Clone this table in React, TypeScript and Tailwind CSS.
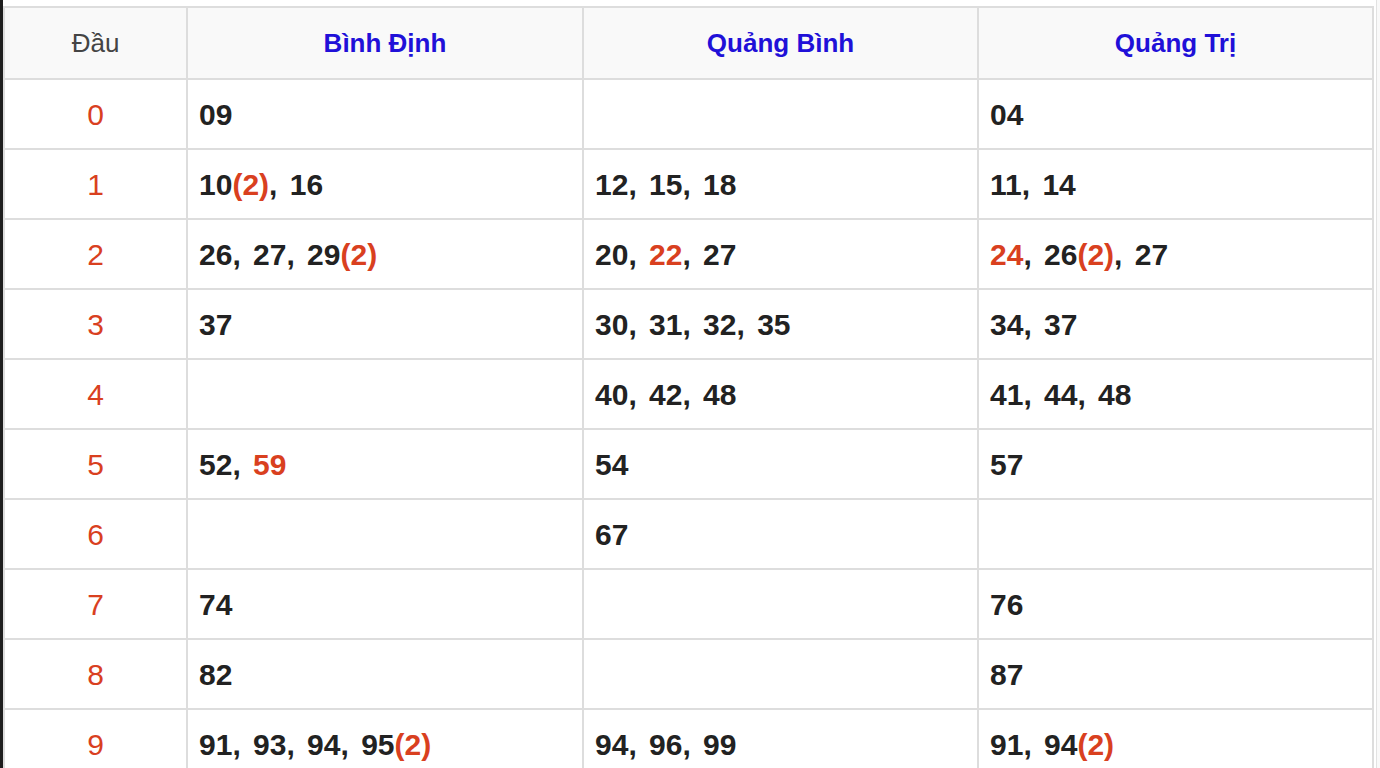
type Item = { n: string; c?: number; hot?: boolean };

const provinces = ['Bình Định', 'Quảng Bình', 'Quảng Trị'];

// số đầu 0-9, mỗi tỉnh một cột
const rows: Item[][][] = [
  [[{ n: '09' }], [], [{ n: '04' }]],
  [[{ n: '10', c: 2 }, { n: '16' }], [{ n: '12' }, { n: '15' }, { n: '18' }], [{ n: '11' }, { n: '14' }]],
  [
    [{ n: '26' }, { n: '27' }, { n: '29', c: 2 }],
    [{ n: '20' }, { n: '22', hot: true }, { n: '27' }],
    [{ n: '24', hot: true }, { n: '26', c: 2 }, { n: '27' }],
  ],
  [[{ n: '37' }], [{ n: '30' }, { n: '31' }, { n: '32' }, { n: '35' }], [{ n: '34' }, { n: '37' }]],
  [[], [{ n: '40' }, { n: '42' }, { n: '48' }], [{ n: '41' }, { n: '44' }, { n: '48' }]],
  [[{ n: '52' }, { n: '59', hot: true }], [{ n: '54' }], [{ n: '57' }]],
  [[], [{ n: '67' }], []],
  [[{ n: '74' }], [], [{ n: '76' }]],
  [[{ n: '82' }], [], [{ n: '87' }]],
  [
    [{ n: '91' }, { n: '93' }, { n: '94' }, { n: '95', c: 2 }],
    [{ n: '94' }, { n: '96' }, { n: '99' }],
    [{ n: '91' }, { n: '94', c: 2 }],
  ],
];

function Cell({ items }: { items: Item[] }) {
  return (
    <div className="bg-white h-[68px] flex items-center pl-[11px] text-[30px] font-bold text-[#222] whitespace-nowrap">
      <span>
        {items.map((it, i) => (
          <span key={i}>
            <span className={it.hot ? 'text-[#d9401f]' : ''}>{it.n}</span>
            {it.c && <span className="text-[#d9401f]">({it.c})</span>}
            {i < items.length - 1 && <span className="mr-[4px]">, </span>}
          </span>
        ))}
      </span>
    </div>
  );
}

export default function App() {
  return (
    <div className="flex w-[1380px] h-[768px] overflow-hidden bg-white" style={{ fontFamily: '"Liberation Sans", Arial, sans-serif' }}>
      <div className="w-[3px] bg-[#1e1e1e] shrink-0" />
      <div className="pt-[6px] shrink-0">
        <div className="grid grid-cols-[181px_394px_393px_393px] gap-[2px] p-[2px] bg-[#dddddd] w-[1371px]">
          <div className="bg-[#f9f9f9] h-[70px] flex items-center justify-center text-[26px] text-[#444]">Đầu</div>
          {provinces.map(p => (
            <div key={p} className="bg-[#f9f9f9] h-[70px] flex items-center justify-center text-[26px] font-bold text-[#2010d8]">
              {p}
            </div>
          ))}
          {rows.map((r, i) => (
            <>
              <div key={'h' + i} className="bg-white h-[68px] flex items-center justify-center text-[30px] text-[#d9401f]">
                {i}
              </div>
              {r.map((items, j) => (
                <Cell key={i + '-' + j} items={items} />
              ))}
            </>
          ))}
        </div>
      </div>
      <div className="w-[2px] shrink-0" />
      <div className="w-[1px] bg-[#e2e2e2] shrink-0" />
      <div className="flex-1 bg-[#f9f9f9]" />
    </div>
  );
}
